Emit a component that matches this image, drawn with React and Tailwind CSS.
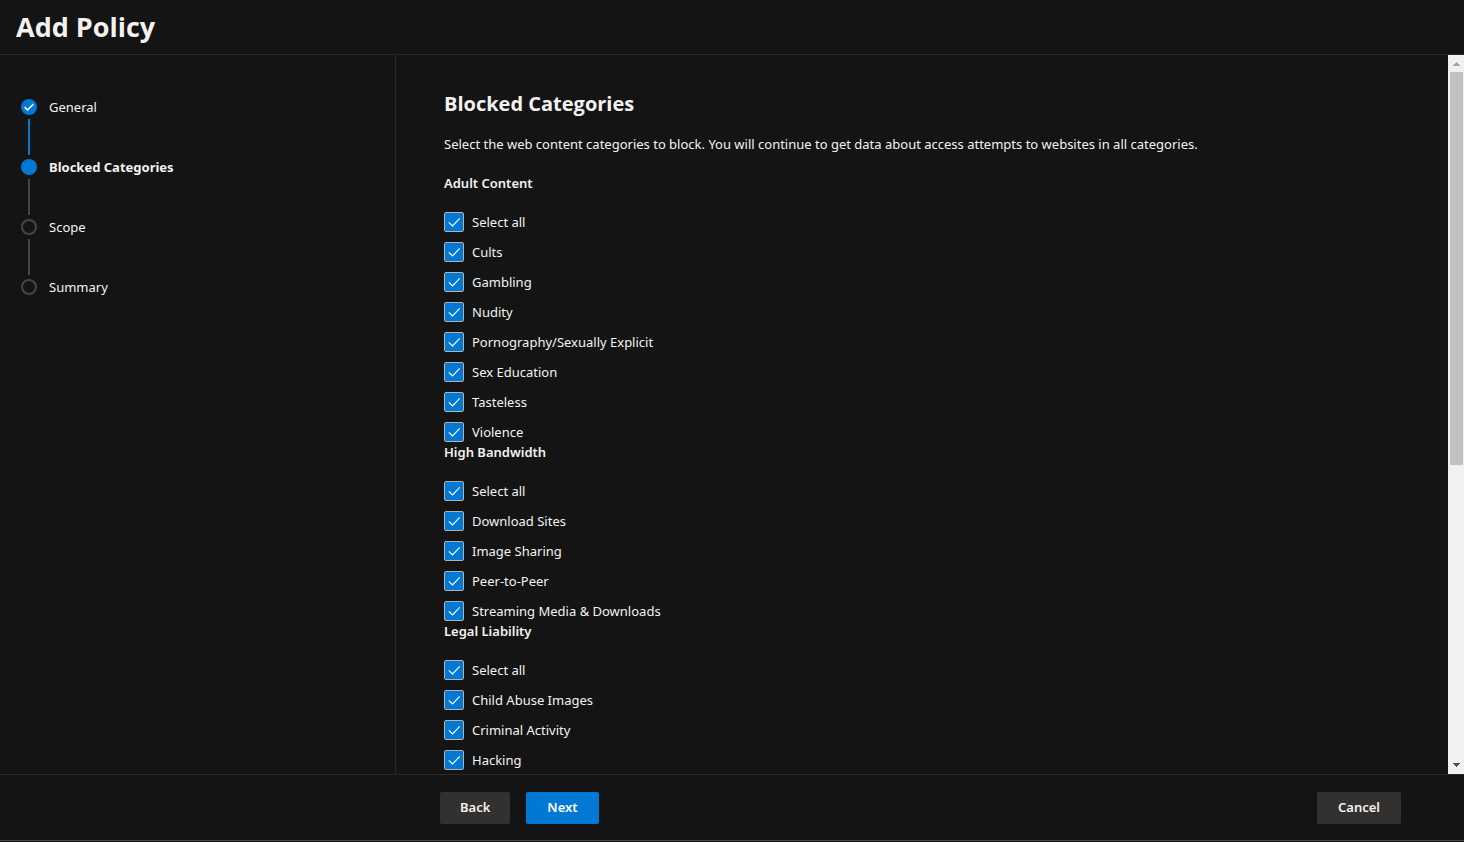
import { useState } from "react";

const steps = [
  { label: "General", state: "done" },
  { label: "Blocked Categories", state: "current" },
  { label: "Scope", state: "todo" },
  { label: "Summary", state: "todo" },
];

const groups = [
  {
    title: "Adult Content",
    items: ["Select all", "Cults", "Gambling", "Nudity", "Pornography/Sexually Explicit", "Sex Education", "Tasteless", "Violence"],
  },
  {
    title: "High Bandwidth",
    items: ["Select all", "Download Sites", "Image Sharing", "Peer-to-Peer", "Streaming Media & Downloads"],
  },
  {
    title: "Legal Liability",
    items: ["Select all", "Child Abuse Images", "Criminal Activity", "Hacking"],
  },
];

function StepMarker({ state }) {
  if (state === "todo") {
    return <span className="size-4 rounded-full border-2 border-[#484644]" />;
  }
  return (
    <span className="grid size-4 place-items-center rounded-full bg-[#0078d4]">
      {state === "done" && (
        <svg viewBox="0 0 16 16" className="size-4" fill="none" stroke="#fff" strokeWidth="1.6" aria-hidden="true">
          <path d="M3.6 8.2 6.6 11 12.4 5" />
        </svg>
      )}
    </span>
  );
}

function Step({ label, state, last }) {
  return (
    <li className="flex gap-3">
      <div className="flex w-4 flex-col items-center gap-1">
        <StepMarker state={state} />
        {!last && <span className={state === "done" ? "mb-1 h-9 w-0.5 bg-[#0078d4]" : "mb-1 h-9 w-0.5 bg-[#484644]"} />}
      </div>
      <a
        href="#step"
        aria-current={state === "current" ? "step" : undefined}
        className={state === "current" ? "text-[13px] leading-4 font-bold" : "text-[13px] leading-4"}
      >
        {label}
      </a>
    </li>
  );
}

function CheckRow({ id, label }) {
  const [checked, setChecked] = useState(true);
  return (
    <li className="flex items-center gap-2">
      <span className="grid size-5">
        <input
          id={id}
          type="checkbox"
          checked={checked}
          onChange={() => setChecked(!checked)}
          className="col-start-1 row-start-1 size-5 appearance-none rounded-xs border border-[#b3b0ad] checked:bg-[#0078d4]"
        />
        {checked && (
          <svg viewBox="0 0 20 20" className="pointer-events-none col-start-1 row-start-1 size-5" fill="none" stroke="#fff" strokeWidth="1.2" aria-hidden="true">
            <path d="M4.8 10.3 8.5 14 15.7 6.4" />
          </svg>
        )}
      </span>
      <label htmlFor={id} className="text-[13px] leading-5">
        {label}
      </label>
    </li>
  );
}

function ScrollRail() {
  return (
    <div className="flex w-4 shrink-0 flex-col bg-[#f1f1f1]" aria-hidden="true">
      <svg viewBox="0 0 16 17" className="h-[17px] w-4" fill="#a3a3a3" shapeRendering="crispEdges">
        <path d="M8 7h1v1h1v1h1v1h1v1H5v-1h1V9h1V8h1z" />
      </svg>
      <div className="flex-1 pr-px pl-0.5">
        <div className="h-[57.4%] bg-[#c1c1c1]" />
      </div>
      <svg viewBox="0 0 16 17" className="h-[17px] w-4" fill="#505050" shapeRendering="crispEdges">
        <path d="M5 6h7v1h-1v1h-1v1H9v1H8V9H7V8H6V7H5z" />
      </svg>
    </div>
  );
}

export default function App() {
  return (
    <div className="flex h-screen flex-col bg-[#141414] pb-px font-['Segoe_UI','Noto_Sans',sans-serif] text-[#f3f2f1]">
      <header className="border-b border-[#292827] px-4 pt-[9px] pb-[9px]">
        <h1 className="font-['Segoe_UI','Open_Sans',sans-serif] text-[27px] leading-9 font-bold">Add Policy</h1>
      </header>

      <div className="flex min-h-0 flex-1">
        <nav aria-label="Steps" className="w-[28%] max-w-[396px] shrink-0 border-r border-[#292827] pt-11 pl-[21px]">
          <ol>
            {steps.map((step, i) => (
              <Step key={step.label} {...step} last={i === steps.length - 1} />
            ))}
          </ol>
        </nav>

        <main className="min-w-0 flex-1 overflow-y-auto px-12 pt-[35px] [scrollbar-width:none]">
          <h2 className="font-['Segoe_UI','Open_Sans',sans-serif] text-[20px] leading-7 font-bold">Blocked Categories</h2>
          <p className="mt-4 mb-[19px] text-[13px] leading-5">
            Select the web content categories to block. You will continue to get data about access attempts to websites in all categories.
          </p>
          {groups.map((group, g) => (
            <section key={group.title}>
              <h3 className="mb-[19px] text-[13px] leading-5 font-semibold">{group.title}</h3>
              <ul className="flex flex-col gap-[10px]">
                {group.items.map((item, i) => (
                  <CheckRow key={item} id={`category-${g}-${i}`} label={item} />
                ))}
              </ul>
            </section>
          ))}
        </main>
        <ScrollRail />
      </div>

      <footer className="flex border-t border-b border-t-[#292827] border-b-[#484648] pt-[17px] pb-4">
        <div className="w-[31%] max-w-[440px] shrink-0" />
        <div className="flex flex-1 gap-4 pr-[63px]">
          <button type="button" className="h-8 rounded-xs bg-[#323130] px-5 text-[13px] font-semibold">Back</button>
          <button type="button" className="h-8 rounded-xs bg-[#0078d4] px-[21px] text-[13px] font-semibold text-white">Next</button>
          <button type="button" className="ml-auto h-8 rounded-xs bg-[#323130] px-[21px] text-[13px] font-semibold">Cancel</button>
        </div>
      </footer>
    </div>
  );
}
